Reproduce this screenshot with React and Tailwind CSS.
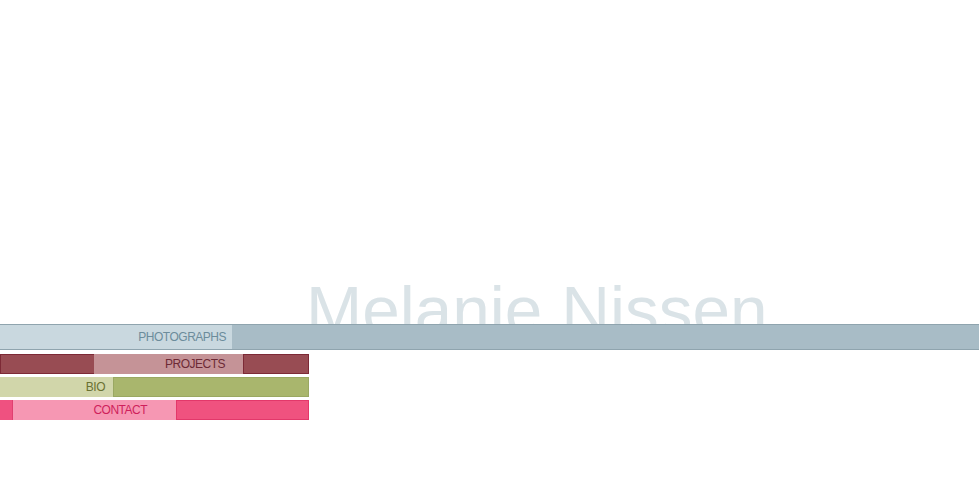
const font = { fontFamily: '"Liberation Sans", Arial, sans-serif' };

const navBars = [
  {
    label: "PROJECTS",
    mt: "mt-[4px]",
    segments: [
      { w: "w-[94px]", cls: "bg-[#984c53] border-y border-l border-[#7d2a36]" },
      { w: "w-[149px]", cls: "bg-[#c59397] text-[#6d2a35] justify-end pr-[18px]", text: true },
      { w: "w-[66px]", cls: "bg-[#984c53] border border-[#7d2a36]" },
    ],
  },
  {
    label: "BIO",
    mt: "mt-[3px]",
    segments: [
      { w: "w-[113px]", cls: "bg-[#d1d6aa] text-[#6a7132] justify-end pr-[8px]", text: true },
      { w: "w-[196px]", cls: "bg-[#a9b66d] border border-[#9aa862]" },
    ],
  },
  {
    label: "CONTACT",
    mt: "mt-[3px]",
    segments: [
      { w: "w-[13px]", cls: "bg-[#ef5180] border-r border-[#e03f70]" },
      { w: "w-[163px]", cls: "bg-[#f697b3] text-[#cf1f5b] justify-end pr-[29px]", text: true },
      { w: "w-[133px]", cls: "bg-[#f0527f] border border-[#e3386a]" },
    ],
  },
];

const App = () => {
  return (
    <div className="w-[979px] h-[480px] bg-white overflow-hidden" style={font}>
      <div className="h-[276px]" />
      <div className="h-[48px] overflow-hidden pl-[306px]">
        <div className="text-[67.5px] leading-none text-[#dae3e7] whitespace-nowrap">
          Melanie Nissen
        </div>
      </div>

      <div className="flex h-[26px] border-y border-[#8fa4ae]">
        <div className="w-[232px] bg-[#c9d8df] flex items-center justify-end pr-[6px] text-[12px] tracking-[-0.5px] text-[#6c8c9b]">
          PHOTOGRAPHS
        </div>
        <div className="flex-1 bg-[#a8bcc6]" />
      </div>

      {navBars.map((bar) => (
        <div key={bar.label} className={`flex h-[20px] ${bar.mt}`}>
          {bar.segments.map((seg, i) => (
            <div key={i} className={`${seg.w} ${seg.cls} flex items-center text-[12px] tracking-[-0.5px]`}>
              {seg.text ? bar.label : null}
            </div>
          ))}
        </div>
      ))}
    </div>
  );
};

export default App;
